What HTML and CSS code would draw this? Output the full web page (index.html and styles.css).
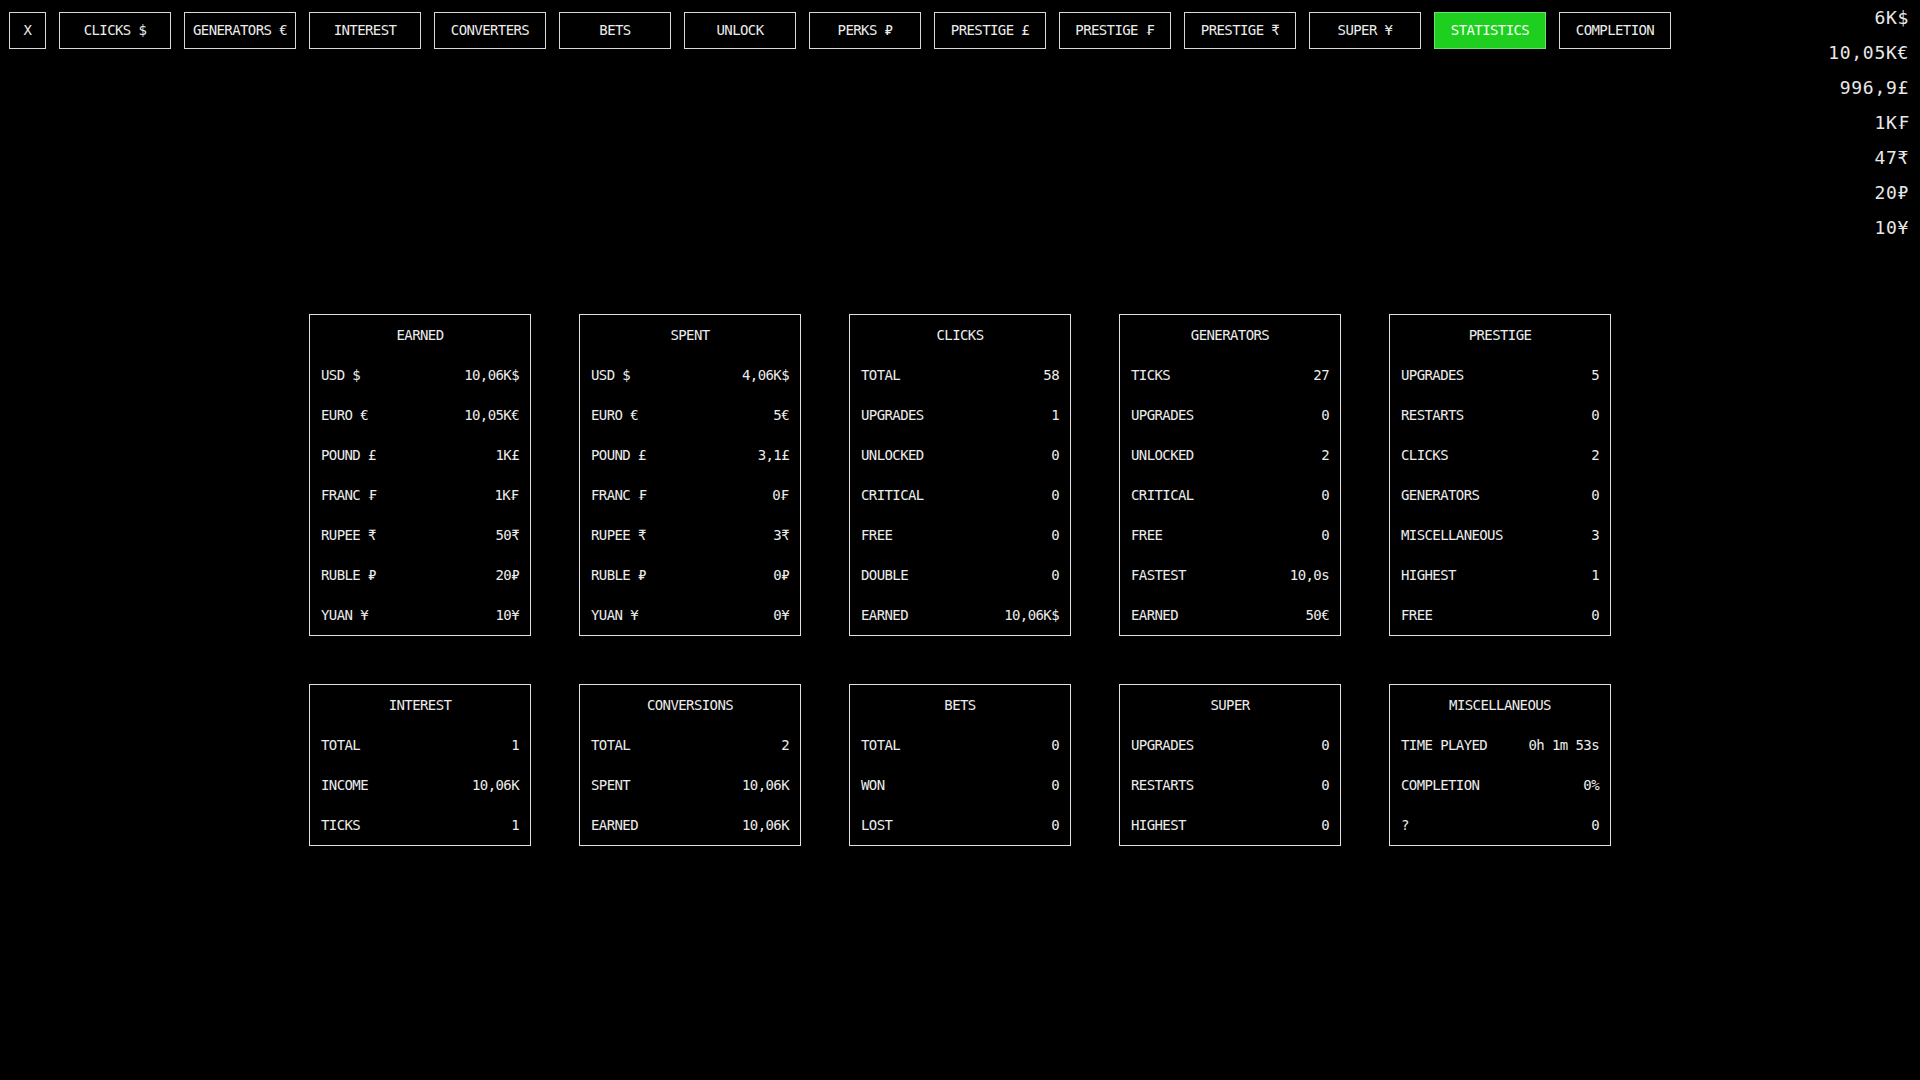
FILE: index.html
```html
<!DOCTYPE html>
<html>
<head>
<meta charset="utf-8">
<link rel="stylesheet" href="styles.css">
</head>
<body>
<header class="top">
  <nav class="nav">
    <button class="btn btn-x">X</button>
    <button class="btn">CLICKS $</button>
    <button class="btn">GENERATORS €</button>
    <button class="btn">INTEREST</button>
    <button class="btn">CONVERTERS</button>
    <button class="btn">BETS</button>
    <button class="btn">UNLOCK</button>
    <button class="btn">PERKS ₽</button>
    <button class="btn">PRESTIGE £</button>
    <button class="btn">PRESTIGE <span class="fr">₣</span></button>
    <button class="btn">PRESTIGE ₹</button>
    <button class="btn">SUPER ¥</button>
    <button class="btn btn-active">STATISTICS</button>
    <button class="btn">COMPLETION</button>
  </nav>
  <div class="wallet">
    <div>6K$</div>
    <div>10,05K€</div>
    <div>996,9£</div>
    <div>1K<span class="fr">₣</span></div>
    <div>47₹</div>
    <div>20₽</div>
    <div>10¥</div>
  </div>
</header>
<main class="grid">
  <section class="card">
    <h2 class="title">EARNED</h2>
    <div class="row"><span>USD $</span><span>10,06K$</span></div>
    <div class="row"><span>EURO €</span><span>10,05K€</span></div>
    <div class="row"><span>POUND £</span><span>1K£</span></div>
    <div class="row"><span>FRANC <span class="fr">₣</span></span><span>1K<span class="fr">₣</span></span></div>
    <div class="row"><span>RUPEE ₹</span><span>50₹</span></div>
    <div class="row"><span>RUBLE ₽</span><span>20₽</span></div>
    <div class="row"><span>YUAN ¥</span><span>10¥</span></div>
  </section>
  <section class="card">
    <h2 class="title">SPENT</h2>
    <div class="row"><span>USD $</span><span>4,06K$</span></div>
    <div class="row"><span>EURO €</span><span>5€</span></div>
    <div class="row"><span>POUND £</span><span>3,1£</span></div>
    <div class="row"><span>FRANC <span class="fr">₣</span></span><span>0<span class="fr">₣</span></span></div>
    <div class="row"><span>RUPEE ₹</span><span>3₹</span></div>
    <div class="row"><span>RUBLE ₽</span><span>0₽</span></div>
    <div class="row"><span>YUAN ¥</span><span>0¥</span></div>
  </section>
  <section class="card">
    <h2 class="title">CLICKS</h2>
    <div class="row"><span>TOTAL</span><span>58</span></div>
    <div class="row"><span>UPGRADES</span><span>1</span></div>
    <div class="row"><span>UNLOCKED</span><span>0</span></div>
    <div class="row"><span>CRITICAL</span><span>0</span></div>
    <div class="row"><span>FREE</span><span>0</span></div>
    <div class="row"><span>DOUBLE</span><span>0</span></div>
    <div class="row"><span>EARNED</span><span>10,06K$</span></div>
  </section>
  <section class="card">
    <h2 class="title">GENERATORS</h2>
    <div class="row"><span>TICKS</span><span>27</span></div>
    <div class="row"><span>UPGRADES</span><span>0</span></div>
    <div class="row"><span>UNLOCKED</span><span>2</span></div>
    <div class="row"><span>CRITICAL</span><span>0</span></div>
    <div class="row"><span>FREE</span><span>0</span></div>
    <div class="row"><span>FASTEST</span><span>10,0s</span></div>
    <div class="row"><span>EARNED</span><span>50€</span></div>
  </section>
  <section class="card">
    <h2 class="title">PRESTIGE</h2>
    <div class="row"><span>UPGRADES</span><span>5</span></div>
    <div class="row"><span>RESTARTS</span><span>0</span></div>
    <div class="row"><span>CLICKS</span><span>2</span></div>
    <div class="row"><span>GENERATORS</span><span>0</span></div>
    <div class="row"><span>MISCELLANEOUS</span><span>3</span></div>
    <div class="row"><span>HIGHEST</span><span>1</span></div>
    <div class="row"><span>FREE</span><span>0</span></div>
  </section>
  <section class="card">
    <h2 class="title">INTEREST</h2>
    <div class="row"><span>TOTAL</span><span>1</span></div>
    <div class="row"><span>INCOME</span><span>10,06K</span></div>
    <div class="row"><span>TICKS</span><span>1</span></div>
  </section>
  <section class="card">
    <h2 class="title">CONVERSIONS</h2>
    <div class="row"><span>TOTAL</span><span>2</span></div>
    <div class="row"><span>SPENT</span><span>10,06K</span></div>
    <div class="row"><span>EARNED</span><span>10,06K</span></div>
  </section>
  <section class="card">
    <h2 class="title">BETS</h2>
    <div class="row"><span>TOTAL</span><span>0</span></div>
    <div class="row"><span>WON</span><span>0</span></div>
    <div class="row"><span>LOST</span><span>0</span></div>
  </section>
  <section class="card">
    <h2 class="title">SUPER</h2>
    <div class="row"><span>UPGRADES</span><span>0</span></div>
    <div class="row"><span>RESTARTS</span><span>0</span></div>
    <div class="row"><span>HIGHEST</span><span>0</span></div>
  </section>
  <section class="card">
    <h2 class="title">MISCELLANEOUS</h2>
    <div class="row"><span>TIME PLAYED</span><span>0h 1m 53s</span></div>
    <div class="row"><span>COMPLETION</span><span>0%</span></div>
    <div class="row"><span>?</span><span>0</span></div>
  </section>
</main>
</body>
</html>
```
FILE: styles.css
```css
html, body {
  margin: 0;
  padding: 0;
  background: #000;
  color: #ececec;
  font-family: "DejaVu Sans Mono", "Liberation Mono", monospace;
}

.fr {
  font-family: "DejaVu Sans", "Noto Sans", sans-serif;
  letter-spacing: 0;
}

.top {
  display: flex;
  justify-content: space-between;
  align-items: flex-start;
}

.nav {
  display: flex;
  gap: 13px;
  padding: 12px 0 0 9px;
}

.btn {
  box-sizing: border-box;
  width: 112px;
  height: 37px;
  padding: 0;
  margin: 0;
  background: #000;
  color: #ececec;
  border: 1px solid #d8d8d8;
  border-radius: 0;
  font-family: inherit;
  font-size: 14px;
  letter-spacing: -0.6px;
  line-height: 35px;
  text-align: center;
  white-space: nowrap;
}

.btn-x {
  width: 37px;
}

.btn-active {
  background: #1fcf1f;
  border-color: #6ee26e;
  color: #f4fff4;
}

.wallet {
  padding: 0 11px 0 0;
  text-align: right;
  font-size: 18px;
  letter-spacing: 0.7px;
  line-height: 35px;
  color: #e8e8e8;
}

.grid {
  display: grid;
  grid-template-columns: repeat(5, 222px);
  column-gap: 48px;
  row-gap: 48px;
  justify-content: center;
  margin-top: 69px;
}

.card {
  box-sizing: border-box;
  border: 1px solid #e0e0e0;
  padding: 1px 11px 0;
  font-size: 14px;
  letter-spacing: -0.6px;
}

.title {
  margin: 0;
  font-size: 14px;
  font-weight: normal;
  line-height: 39px;
  text-align: center;
}

.row {
  display: flex;
  justify-content: space-between;
  line-height: 40px;
  white-space: nowrap;
}
```
